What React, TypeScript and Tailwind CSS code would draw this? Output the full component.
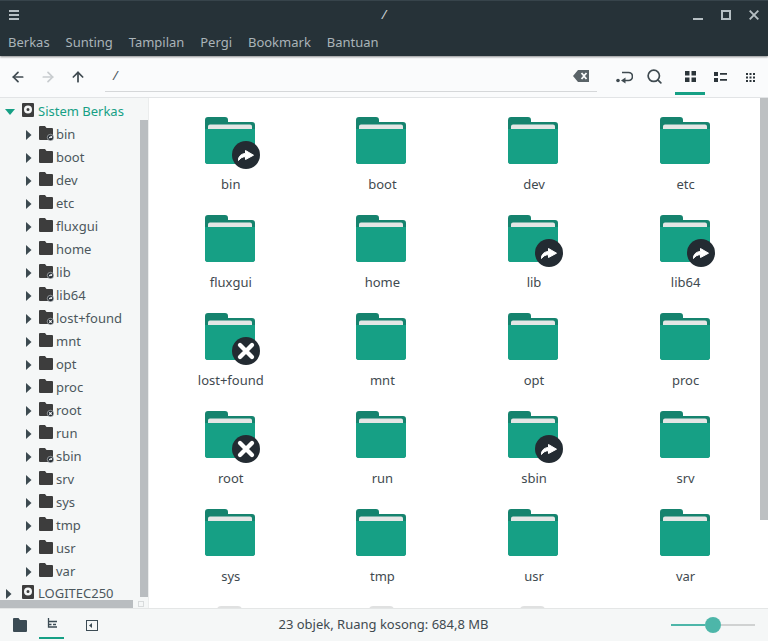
import { ArrowLeft, ArrowRight, ArrowUp, Search } from "lucide-react";

const menus = ["Berkas", "Sunting", "Tampilan", "Pergi", "Bookmark", "Bantuan"];

// kind: 0 normal, 1 symlink, 2 no access
const treeItems: [string, number][] = [
  ["bin", 1], ["boot", 0], ["dev", 0], ["etc", 0], ["fluxgui", 0], ["home", 0], ["lib", 1], ["lib64", 1],
  ["lost+found", 2], ["mnt", 0], ["opt", 0], ["proc", 0], ["root", 2], ["run", 0], ["sbin", 1], ["srv", 0],
  ["sys", 0], ["tmp", 0], ["usr", 0], ["var", 0],
];

const Caret = ({ open }: { open?: boolean }) => (
  <svg width="10" height="12" viewBox="0 0 10 12" className="shrink-0">
    {open ? <path d="M0 3h10L5 9z" fill="#16a085" /> : <path d="M1 1l5.500 5L1 11z" fill="#3c4a50" />}
  </svg>
);

const Disk = () => (
  <svg width="12" height="14" viewBox="0 0 12 14" className="shrink-0">
    <path fillRule="evenodd" d="M1 0h10a1 1 0 0 1 1 1v12a1 1 0 0 1-1 1H1a1 1 0 0 1-1-1V1a1 1 0 0 1 1-1zm5 2.500a4 4 0 1 0 0 8 4 4 0 0 0 0-8zm0 2.500a1.500 1.500 0 1 1 0 3 1.500 1.500 0 0 1 0-3z" fill="#3d3d3d" />
  </svg>
);

const SmallFolder = ({ kind }: { kind: number }) => (
  <svg width="16" height="15" viewBox="0 0 16 15" className="shrink-0">
    <path d="M0 1a1 1 0 0 1 1-1h5l1.500 2H13a1 1 0 0 1 1 1v10a1 1 0 0 1-1 1H1a1 1 0 0 1-1-1z" fill="#3d3d3d" />
    {kind > 0 && <circle cx="11.500" cy="11.500" r="3.200" fill="#232b32" stroke="#f5f7f7" strokeWidth="0.500" />}
    {kind === 1 && <path d="M9.800 13c0-2 .8-2.500 2-2.500V9.500l1.800 1.500-1.800 1.500v-.8c-.8 0-1.500.2-2 1.300z" fill="#fff" />}
    {kind === 2 && <path d="M10.300 10.300l2.400 2.400m0-2.400l-2.400 2.400" stroke="#fff" strokeWidth="1.200" />}
  </svg>
);

const TreeRow = ({ name, kind }: { name: string; kind: number }) => (
  <div className="h-[23px] flex items-center pl-[25px]">
    <Caret />
    <span className="ml-[4px] -mt-[2px] flex"><SmallFolder kind={kind} /></span>
    <span className="ml-[1px] text-[13px] leading-[23px] text-[#4c575d]">{name}</span>
  </div>
);

const BigFolder = () => (
  <svg width="50" height="47" viewBox="0 0 50 47" className="block">
    <path d="M0 3a3 3 0 0 1 3-3h17a3 3 0 0 1 3 3v2h24a3 3 0 0 1 3 3v36a3 3 0 0 1-3 3H3a3 3 0 0 1-3-3z" fill="#15836e" />
    <path d="M3 9.500a2 2 0 0 1 2-2h40a2 2 0 0 1 2 2v8H3z" fill="#e4e6e5" />
    <path d="M0 12h50v32a3 3 0 0 1-3 3H3a3 3 0 0 1-3-3z" fill="#16a085" />
  </svg>
);

const LinkBadge = () => (
  <svg width="28" height="28" viewBox="0 0 28 28" className="absolute left-[27px] top-[24px]">
    <circle cx="14" cy="14" r="14" fill="#232b32" />
    <path d="M6.500 19.500c-.3-3.800 2.500-6.800 7-7V9.500l8 4.700-8 4.300v-2.800c-3 0-5 1.200-7 3.800z" fill="#fff" stroke="#fff" strokeWidth="1" strokeLinejoin="round" />
  </svg>
);

const ErrorBadge = () => (
  <svg width="28" height="28" viewBox="0 0 28 28" className="absolute left-[27px] top-[24px]">
    <circle cx="14" cy="14" r="14" fill="#232b32" />
    <path d="M8 8l12 12m0-12L8 20" stroke="#fff" strokeWidth="4.300" strokeLinecap="round" />
  </svg>
);

const GridItem = ({ name, kind }: { name: string; kind: number }) => (
  <div className="h-[98px] flex flex-col items-center">
    <div className="relative w-[50px] h-[47px]">
      <BigFolder />
      {kind === 1 && <LinkBadge />}
      {kind === 2 && <ErrorBadge />}
    </div>
    <div className="mt-[11px] pl-[2px] text-[13px] leading-[18px] text-[#3f4a50]">{name}</div>
  </div>
);

export default function App() {
  return (
    <div className="w-[768px] h-[641px] flex flex-col overflow-hidden bg-white font-['Noto_Sans',sans-serif]">
      {/* Header */}
      <header className="h-[56px] shrink-0 bg-[#263238] border-t border-[#37444b] shadow-[0_1px_2px_rgba(0,0,0,0.45)] z-10">
        <div className="h-[27px] grid grid-cols-[1fr_auto_1fr] items-center text-[#b6bfc3]">
          <div className="pl-[9px]">
            <svg width="10" height="10" viewBox="0 0 10 10" className="block">
              <path d="M0 0h10v2H0zM0 4h10v2H0zM0 8h10v2H0z" fill="currentColor" />
            </svg>
          </div>
          <span className="text-[13px] text-[#c9d0d3] italic">/</span>
          <div className="flex justify-end items-center gap-[18px] pr-[9px]">
            <svg width="10" height="10" viewBox="0 0 10 10"><path d="M0 8h10v2H0z" fill="currentColor" /></svg>
            <svg width="10" height="10" viewBox="0 0 10 10"><path fillRule="evenodd" d="M0 0h10v10H0zM2 2v6h6V2z" fill="currentColor" /></svg>
            <svg width="10" height="10" viewBox="0 0 10 10"><path d="M.7.700l8.600 8.600m0-8.600L.7 9.300" stroke="currentColor" strokeWidth="1.900" /></svg>
          </div>
        </div>
        <nav className="flex gap-[15.9px] pl-[8px] pt-[5px] text-[13px] leading-[18px] text-[#aab4b9]">
          {menus.map((m) => (
            <span key={m}>{m}</span>
          ))}
        </nav>
      </header>

      {/* Toolbar */}
      <div className="h-[42px] shrink-0 bg-[#fafbfc] border-b border-[#e2e4e6] flex items-stretch text-[#3f4a50]">
        <div className="flex items-center gap-[14px] pl-[10px] w-[105px]">
          <ArrowLeft size={16} strokeWidth={2.600} />
          <ArrowRight size={16} strokeWidth={2.600} className="text-[#c8cccf]" />
          <ArrowUp size={16} strokeWidth={2.600} />
        </div>
        <div className="w-[492px] h-[36px] border-b-[1.500px] border-[#d5d7d9] flex items-center justify-between pl-[8px] pr-[8px] pt-[4px]">
          <span className="text-[13px] italic text-[#4c575d]">/</span>
          <svg width="16" height="12" viewBox="0 0 16 12">
            <path fillRule="evenodd" d="M5 0h11v12H5L0 6zm2.800 3.500L10 6 7.800 8.500l1.400 1L11 7.500l1.800 2 1.400-1L12 6l2.200-2.500-1.400-1L11 4.500l-1.800-2z" fill="#5a6368" />
          </svg>
        </div>
        <div className="flex-1 flex items-center">
          <svg width="17" height="13" viewBox="0 0 17 13" className="ml-[19px] mt-[1px]">
            <circle cx="2" cy="9.500" r="1.800" fill="#3f4a50" />
            <path d="M7 9.500H12.500a3.500 3.500 0 0 0 0-8H6" fill="none" stroke="#3f4a50" strokeWidth="1.700" />
            <path d="M9.500 6.500L5 9.500l4.500 3z" fill="#3f4a50" />
          </svg>
          <Search size={17} strokeWidth={2.400} className="ml-[13px]" />
          <div className="ml-[12px] w-[30px] h-[39px] self-start pt-[5px] flex items-center justify-center border-b-[3px] border-[#16a085]">
            <svg width="11" height="11" viewBox="0 0 11 11"><path d="M0 0h4.500v4.500H0zM6.500 0H11v4.500H6.500zM0 6.500h4.500V11H0zM6.500 6.500H11V11H6.500z" fill="#2c353a" /></svg>
          </div>
          <svg width="13" height="10" viewBox="0 0 13 10" className="ml-[9px] mt-[1px]"><path d="M0 0h4v4H0zM6 1h7v1.800H6zM0 6h4v4H0zM6 7h7v1.800H6z" fill="#2c353a" /></svg>
          <svg width="9" height="9" viewBox="0 0 9 9" className="ml-[19px] mt-[1px]"><path d="M0 0h2v2H0zM3.500 0h2v2h-2zM7 0h2v2H7zM0 3.500h2v2H0zM3.500 3.500h2v2h-2zM7 3.500h2v2H7zM0 7h2v2H0zM3.500 7h2v2h-2zM7 7h2v2H7z" fill="#2c353a" /></svg>
        </div>
      </div>

      {/* Body */}
      <div className="flex-1 min-h-0 flex">
        {/* Sidebar */}
        <aside className="w-[149px] shrink-0 bg-[#f5f7f7] border-r border-[#ebeded] flex flex-col">
          <div className="flex-1 min-h-0 flex">
            <div className="w-[140px] pt-[2px]">
              <div className="h-[23px] flex items-center pl-[5px] gap-[4px]">
                <Caret open />
                <span className="ml-[3px] -mt-[3px] flex"><Disk /></span>
                <span className="text-[13px] text-[#16a085] whitespace-nowrap">Sistem Berkas</span>
              </div>
              {treeItems.map(([name, kind]) => (
                <TreeRow key={name} name={name} kind={kind} />
              ))}
              <div className="h-[23px] -mt-[1px] flex items-center pl-[5px] gap-[4px]">
                <Caret />
                <span className="ml-[3px] -mt-[3px] flex"><Disk /></span>
                <span className="text-[13px] text-[#4c575d] whitespace-nowrap">LOGITEC250</span>
              </div>
            </div>
            <div className="w-[8px] pt-[22px] pb-[3px]">
              <div className="h-full bg-[#b9bdc0]" />
            </div>
          </div>
          <div className="h-[8px] shrink-0 flex">
            <div className="w-[133px] bg-[#b9bdc0]" />
            <div className="flex-1 flex items-center justify-center">
              <div className="w-[6px] h-[6px] border border-[#d8dbdc]" />
            </div>
          </div>
        </aside>

        {/* Main */}
        <main className="flex-1 min-w-0 flex overflow-hidden">
          <div className="flex-1 overflow-hidden pt-[19px] pl-[5px]">
            <div className="grid grid-cols-4 w-[606.4px]">
              {treeItems.map(([name, kind]) => (
                <GridItem key={name} name={name} kind={kind} />
              ))}
              {[0, 1, 2].map((i) => (
                <div key={i} className="flex justify-center">
                  <div className="w-[25px] h-[4px] rounded-t-sm bg-[#e0e1e1] -mt-[1px]" />
                </div>
              ))}
            </div>
          </div>
          <div className="w-[8px] shrink-0 pb-[88px]">
            <div className="h-full bg-[#bdc0c2]" />
          </div>
        </main>
      </div>

      {/* Status bar */}
      <footer className="h-[33px] shrink-0 bg-[#f5f7f7] border-t border-[#e4e6e6] flex items-stretch text-[#3f4a50]">
        <div className="flex items-center pl-[13px] w-[160px]">
          <svg width="14" height="14" viewBox="0 0 14 14"><path d="M0 1a1 1 0 0 1 1-1h4.500l1.500 2h6a1 1 0 0 1 1 1v10a1 1 0 0 1-1 1H1a1 1 0 0 1-1-1z" fill="#3b4b54" /></svg>
          <div className="ml-[12px] w-[25px] h-[30px] self-start flex items-center justify-center border-b-[2px] border-[#16a085]">
            <svg width="10" height="10" viewBox="0 0 10 10"><path d="M1.500 0v9H10M1.500 3.500H10M1.500 6.500h3M6 6.500h3" fill="none" stroke="#3b4b54" strokeWidth="1.300" /></svg>
          </div>
          <svg width="12" height="11" viewBox="0 0 12 11" className="ml-[22px]"><rect x="0.500" y="0.500" width="11" height="10" fill="none" stroke="#3b4b54" /><path d="M6 3L3 5.500 6 8z" fill="#3b4b54" /></svg>
        </div>
        <div className="flex-1 flex items-center justify-center text-[13px] text-[#3f4a50] pr-[64px]">
          23 objek, Ruang kosong: 684,8 MB
        </div>
        <div className="w-[97px] flex items-center pr-[13px]">
          <div className="w-[34px] h-[2px] bg-[#4db6a9]" />
          <div className="w-[16px] h-[16px] rounded-full bg-[#4db6a9] shrink-0" />
          <div className="flex-1 h-[2px] bg-[#d0d2d2]" />
        </div>
      </footer>
    </div>
  );
}
